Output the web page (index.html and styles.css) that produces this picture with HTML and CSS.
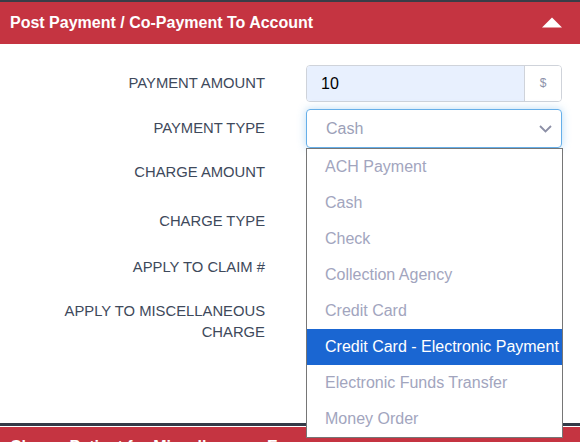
FILE: index.html
```html
<!DOCTYPE html>
<html>
<head>
<meta charset="utf-8">
<link rel="stylesheet" href="styles.css">
</head>
<body>
<div class="page">
  <section class="panel">
    <header class="panel-head">
      <h2 class="panel-title">Post Payment / Co-Payment To Account</h2>
      <svg class="caret" width="20" height="11" viewBox="0 0 20 11"><polygon points="0,10.5 10,0.5 20,10.5" fill="#fff"/></svg>
    </header>
    <div class="panel-body">
      <div class="row r1">
        <label class="lbl">Payment Amount</label>
        <div class="input-group">
          <div class="input">10</div>
          <div class="addon">$</div>
        </div>
      </div>
      <div class="row r2">
        <label class="lbl">Payment Type</label>
        <div class="select">
          <span>Cash</span>
          <svg class="chev" width="13" height="8" viewBox="0 0 13 8"><polyline points="1,1 6.5,6.5 12,1" fill="none" stroke="#8c8fa6" stroke-width="1.8"/></svg>
        </div>
      </div>
      <div class="row r3"><label class="lbl">Charge Amount</label></div>
      <div class="row r4"><label class="lbl">Charge Type</label></div>
      <div class="row r5"><label class="lbl">Apply to Claim #</label></div>
      <div class="row r6"><label class="lbl">Apply to Miscellaneous Charge</label></div>

      <ul class="dropdown">
        <li>ACH Payment</li>
        <li>Cash</li>
        <li>Check</li>
        <li>Collection Agency</li>
        <li>Credit Card</li>
        <li class="sel">Credit Card - Electronic Payment</li>
        <li>Electronic Funds Transfer</li>
        <li>Money Order</li>
      </ul>
    </div>
  </section>
  <section class="panel panel-2">
    <header class="panel-head">
      <h2 class="panel-title">Charge Patient for Miscellaneous Expense</h2>
    </header>
  </section>
</div>
</body>
</html>
```
FILE: styles.css
```css
html, body {
  margin: 0;
  padding: 0;
  background: #fff;
  overflow: hidden;
}
body {
  font-family: "Liberation Sans", Arial, sans-serif;
  width: 580px;
  height: 442px;
}
.page {
  position: relative;
}
.panel {
  border-top: 2px solid #393d47;
}
.panel-head {
  background: #c53441;
  height: 42px;
  padding: 0 18px 0 10px;
  display: flex;
  align-items: center;
  justify-content: space-between;
}
.panel-title {
  margin: 0;
  color: #fff;
  font-size: 16px;
  font-weight: bold;
  line-height: 18px;
}
.caret {
  display: block;
  margin-top: -2px;
}
.panel-body {
  position: relative;
  height: 379px;
  padding-top: 21px;
  box-sizing: border-box;
}
.row {
  display: grid;
  grid-template-columns: 265px 257px;
  column-gap: 41px;
  align-items: center;
}
.lbl {
  text-align: right;
  text-transform: uppercase;
  color: #3e495b;
  font-size: 14.8px;
  line-height: 21px;
  padding-left: 50px;
}
.r1 { height: 37px; }
.r2 { height: 39px; margin-top: 7px; }
.r3 { height: 36px; margin-top: 6px; }
.r4 { height: 40px; margin-top: 11px; }
.r5 { height: 38px; margin-top: 7px; }
.r6 { height: 42px; margin-top: 15px; align-items: start; }

.input-group {
  display: flex;
  height: 37px;
  width: 256px;
  border: 1px solid #cfd3da;
  border-radius: 4px;
  box-sizing: border-box;
  overflow: hidden;
}
.input {
  flex: 1;
  background: #e8f0fe;
  color: #000;
  font-size: 16px;
  line-height: 35px;
  padding-left: 14px;
}
.addon {
  width: 36px;
  border-left: 1px solid #cfd3da;
  background: #fff;
  color: #8d92aa;
  font-size: 12px;
  text-align: center;
  line-height: 35px;
}
.select {
  height: 39px;
  width: 256px;
  box-sizing: border-box;
  border: 1px solid #66afe9;
  border-radius: 4px;
  box-shadow: 0 0 8px rgba(102, 175, 233, 0.45);
  display: flex;
  align-items: center;
  justify-content: space-between;
  padding: 0 9px 0 19px;
  color: #9c9fb8;
  font-size: 16px;
}
.chev {
  display: block;
  margin-top: 1px;
}
.dropdown {
  position: absolute;
  left: 306px;
  top: 104px;
  width: 257px;
  margin: 0;
  padding: 0;
  list-style: none;
  background: #fff;
  border: 1px solid #767676;
  box-sizing: border-box;
  z-index: 5;
}
.dropdown li {
  height: 36px;
  line-height: 36px;
  padding-left: 18px;
  font-size: 16px;
  color: #a2a5be;
  white-space: nowrap;
}
.dropdown li.sel {
  background: #1a66d2;
  color: #fff;
}
.panel-2 {
  border-top: 2px solid #343a47;
}
.panel-2 .panel-head {
  border-top: 1px solid #fff;
  box-shadow: 0 -1px 0 #343a47;
  height: 42px;
  margin-top: 1px;
  align-items: flex-start;
  padding-top: 11px;
  box-sizing: border-box;
}
```
